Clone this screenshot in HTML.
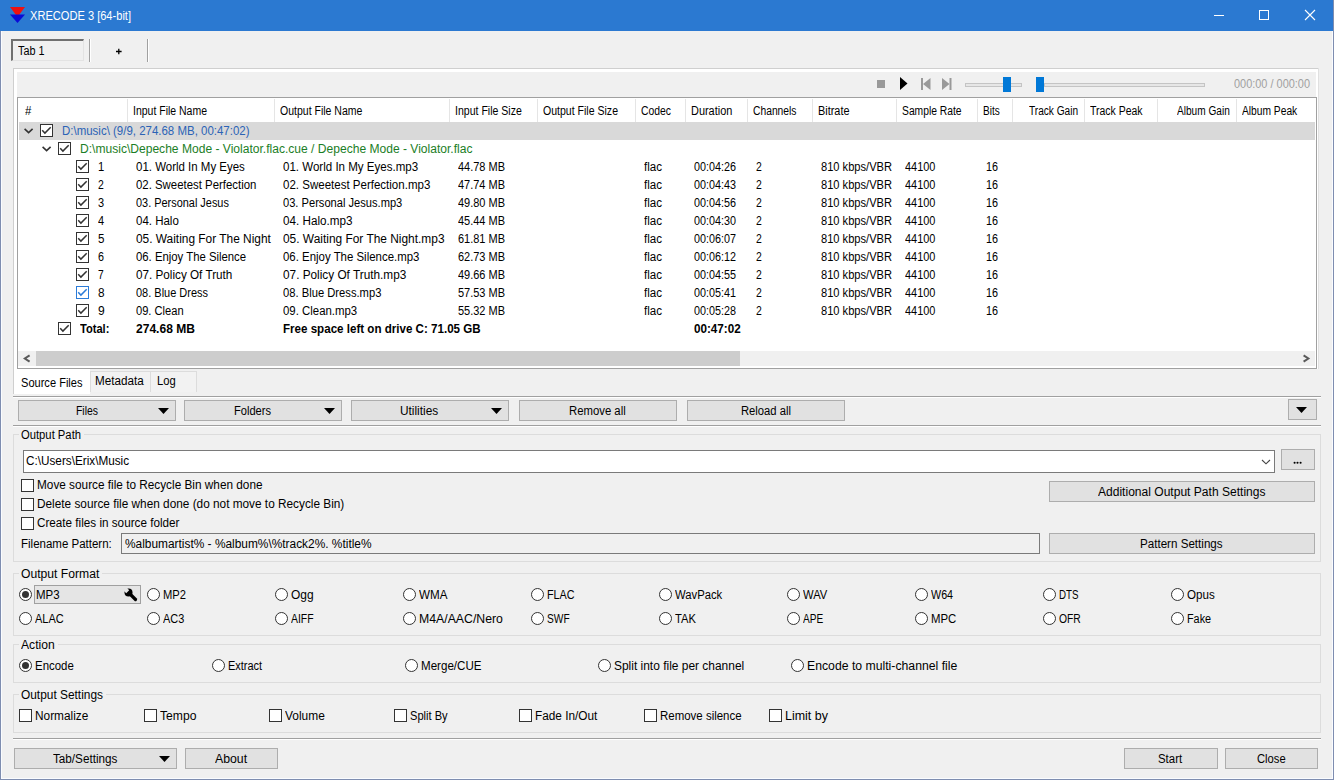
<!DOCTYPE html>
<html><head><meta charset="utf-8"><style>
html,body{margin:0;padding:0;}
body{width:1334px;height:780px;overflow:hidden;position:relative;background:#f0f0f0;font-family:"Liberation Sans",sans-serif;font-size:12px;color:#000;}
.a{position:absolute;}
.t{position:absolute;white-space:nowrap;line-height:18px;height:18px;}
svg{display:block;}
</style></head><body>
<div class="a" style="left:0px;top:0px;width:1334px;height:31px;background:#2b79d1;"></div>
<svg class="a" style="left:0;top:0" width="40" height="31"><path d="M10 7 H25 L17.5 17 Z" fill="#ee1111"/><path d="M10 14.5 H25 L17.5 23 Z" fill="#0a0ad8"/></svg>
<div class="t" style="left:29.50px;top:7px;color:#fff;transform:scaleX(0.9235);transform-origin:left center;">XRECODE 3 [64-bit]</div>
<div class="a" style="left:1214px;top:15px;width:10px;height:1px;background:#fff;"></div>
<div class="a" style="left:1259px;top:10px;width:10px;height:10px;border:1px solid #fff;box-sizing:border-box;"></div>
<svg class="a" style="left:1304px;top:9px" width="12" height="12"><path d="M1 1 L11 11 M11 1 L1 11" stroke="#fff" stroke-width="1.1"/></svg>
<div class="a" style="left:0px;top:31px;width:1px;height:749px;background:#7e8db0;"></div>
<div class="a" style="left:1333px;top:0px;width:1px;height:780px;background:#7e8db0;"></div>
<div class="a" style="left:0px;top:779px;width:1334px;height:1px;background:#7e8db0;"></div>
<div class="a" style="left:1px;top:31px;width:1px;height:748px;background:#fafcff;"></div>
<div class="a" style="left:1332px;top:31px;width:1px;height:748px;background:#fafcff;"></div>
<div class="a" style="left:1px;top:778px;width:1332px;height:1px;background:#fafcff;"></div>
<div class="a" style="left:11px;top:39px;width:73px;height:22px;box-sizing:border-box;border-top:2px solid #707070;border-left:2px solid #707070;border-right:1px solid #e3e3e3;border-bottom:1px solid #e3e3e3;"></div>
<div class="t" style="left:17.50px;top:42px;color:#000;transform:scaleX(0.9027);transform-origin:left center;">Tab 1</div>
<div class="a" style="left:89px;top:39px;width:1px;height:23px;background:#a0a0a0;"></div>
<div class="a" style="left:90px;top:39px;width:1px;height:23px;background:#fff;"></div>
<svg class="a" style="left:114px;top:46px" width="10" height="10"><path d="M2 5.5 H7.6 M4.8 2.8 V8.2" stroke="#000" stroke-width="1.3"/></svg>
<div class="a" style="left:147px;top:39px;width:1px;height:23px;background:#a0a0a0;"></div>
<div class="a" style="left:148px;top:39px;width:1px;height:23px;background:#fff;"></div>
<div class="a" style="left:13px;top:68px;width:1306px;height:1px;background:#cfcfcf;"></div>
<div class="a" style="left:13px;top:68px;width:1px;height:326px;background:#cfcfcf;"></div>
<div class="a" style="left:1318px;top:68px;width:1px;height:301px;background:#e0e0e0;"></div>
<div class="a" style="left:14px;top:69px;width:1304px;height:300px;background:#fff;"></div>
<div class="a" style="left:17px;top:72px;width:1299px;height:25px;background:#f0f0f0;"></div>
<div class="a" style="left:877px;top:80px;width:8px;height:8px;background:#999;"></div>
<svg class="a" style="left:900px;top:77px" width="8" height="13"><path d="M0 0 L7.5 6.5 L0 13 Z" fill="#000"/></svg>
<svg class="a" style="left:921px;top:78px" width="10" height="12"><rect x="0" y="0" width="2" height="12" fill="#999"/><path d="M9.5 0 V12 L2 6 Z" fill="#999"/></svg>
<svg class="a" style="left:942px;top:78px" width="10" height="12"><rect x="7.5" y="0" width="2" height="12" fill="#999"/><path d="M0 0 V12 L7.5 6 Z" fill="#999"/></svg>
<div class="a" style="left:965px;top:83px;width:57px;height:4px;background:#e6e6e6;border:1px solid #c4c4c4;box-sizing:border-box;"></div>
<div class="a" style="left:1003px;top:77px;width:8px;height:15px;background:#0078d7;"></div>
<div class="a" style="left:1044px;top:83px;width:161px;height:4px;background:#e6e6e6;border:1px solid #c4c4c4;box-sizing:border-box;"></div>
<div class="a" style="left:1036px;top:77px;width:8px;height:15px;background:#0078d7;"></div>
<div class="t" style="left:1233.50px;top:75px;color:#a0a0a0;transform:scaleX(0.9112);transform-origin:left center;">000:00 / 000:00</div>
<div class="a" style="left:17px;top:97px;width:1300px;height:272px;background:#fff;border:1px solid #a0a0a0;box-sizing:border-box;"></div>
<div class="t" style="left:25.00px;top:102px;color:#000;transform:scaleX(0.9500);transform-origin:left center;">#</div>
<div class="t" style="left:133.00px;top:102px;color:#000;transform:scaleX(0.8736);transform-origin:left center;">Input File Name</div>
<div class="t" style="left:280.00px;top:102px;color:#000;transform:scaleX(0.8762);transform-origin:left center;">Output File Name</div>
<div class="t" style="left:455.00px;top:102px;color:#000;transform:scaleX(0.8785);transform-origin:left center;">Input File Size</div>
<div class="t" style="left:542.80px;top:102px;color:#000;transform:scaleX(0.8785);transform-origin:left center;">Output File Size</div>
<div class="t" style="left:640.90px;top:102px;color:#000;transform:scaleX(0.8649);transform-origin:left center;">Codec</div>
<div class="t" style="left:690.50px;top:102px;color:#000;transform:scaleX(0.9105);transform-origin:left center;">Duration</div>
<div class="t" style="left:753.30px;top:102px;color:#000;transform:scaleX(0.8580);transform-origin:left center;">Channels</div>
<div class="t" style="left:818.00px;top:102px;color:#000;transform:scaleX(0.9083);transform-origin:left center;">Bitrate</div>
<div class="t" style="left:901.50px;top:102px;color:#000;transform:scaleX(0.8592);transform-origin:left center;">Sample Rate</div>
<div class="t" style="left:982.80px;top:102px;color:#000;transform:scaleX(0.8348);transform-origin:left center;">Bits</div>
<div class="t" style="left:1028.60px;top:102px;color:#000;transform:scaleX(0.8431);transform-origin:left center;">Track Gain</div>
<div class="t" style="left:1090.10px;top:102px;color:#000;transform:scaleX(0.8715);transform-origin:left center;">Track Peak</div>
<div class="t" style="left:1176.70px;top:102px;color:#000;transform:scaleX(0.8422);transform-origin:left center;">Album Gain</div>
<div class="t" style="left:1241.90px;top:102px;color:#000;transform:scaleX(0.8532);transform-origin:left center;">Album Peak</div>
<div class="a" style="left:127px;top:99px;width:1px;height:23px;background:#e5e5e5;"></div>
<div class="a" style="left:274px;top:99px;width:1px;height:23px;background:#e5e5e5;"></div>
<div class="a" style="left:449px;top:99px;width:1px;height:23px;background:#e5e5e5;"></div>
<div class="a" style="left:537px;top:99px;width:1px;height:23px;background:#e5e5e5;"></div>
<div class="a" style="left:635px;top:99px;width:1px;height:23px;background:#e5e5e5;"></div>
<div class="a" style="left:685px;top:99px;width:1px;height:23px;background:#e5e5e5;"></div>
<div class="a" style="left:747px;top:99px;width:1px;height:23px;background:#e5e5e5;"></div>
<div class="a" style="left:812px;top:99px;width:1px;height:23px;background:#e5e5e5;"></div>
<div class="a" style="left:896px;top:99px;width:1px;height:23px;background:#e5e5e5;"></div>
<div class="a" style="left:977px;top:99px;width:1px;height:23px;background:#e5e5e5;"></div>
<div class="a" style="left:1012px;top:99px;width:1px;height:23px;background:#e5e5e5;"></div>
<div class="a" style="left:1084px;top:99px;width:1px;height:23px;background:#e5e5e5;"></div>
<div class="a" style="left:1157px;top:99px;width:1px;height:23px;background:#e5e5e5;"></div>
<div class="a" style="left:1236px;top:99px;width:1px;height:23px;background:#e5e5e5;"></div>
<div class="a" style="left:19px;top:122px;width:1296px;height:18px;background:#d9d9d9;"></div>
<svg class="a" style="left:24px;top:127px" width="10" height="7"><path d="M0.6 1.9 L4.6 5.6 L8.6 1.9" fill="none" stroke="#333" stroke-width="1.6"/></svg>
<svg class="a" style="left:40px;top:124px" width="13" height="13" viewBox="0 0 13 13"><rect x="0.5" y="0.5" width="12" height="12" fill="#fff" stroke="#333" stroke-width="1"/><path d="M2.2 6.3 L4.9 9.1 L10.7 3.3" fill="none" stroke="#333" stroke-width="1.5"/></svg>
<div class="t" style="left:62.30px;top:122px;color:#2b63b6;transform:scaleX(0.9562);transform-origin:left center;">D:\music\ (9/9, 274.68 MB, 00:47:02)</div>
<svg class="a" style="left:42px;top:145px" width="10" height="7"><path d="M0.6 1.9 L4.6 5.6 L8.6 1.9" fill="none" stroke="#333" stroke-width="1.6"/></svg>
<svg class="a" style="left:58px;top:142px" width="13" height="13" viewBox="0 0 13 13"><rect x="0.5" y="0.5" width="12" height="12" fill="#fff" stroke="#333" stroke-width="1"/><path d="M2.2 6.3 L4.9 9.1 L10.7 3.3" fill="none" stroke="#333" stroke-width="1.5"/></svg>
<div class="t" style="left:80.30px;top:140px;color:#1b7e26;transform:scaleX(1.0053);transform-origin:left center;">D:\music\Depeche Mode - Violator.flac.cue / Depeche Mode - Violator.flac</div>
<svg class="a" style="left:76px;top:160px" width="13" height="13" viewBox="0 0 13 13"><rect x="0.5" y="0.5" width="12" height="12" fill="#fff" stroke="#333" stroke-width="1"/><path d="M2.2 6.3 L4.9 9.1 L10.7 3.3" fill="none" stroke="#333" stroke-width="1.5"/></svg>
<div class="t" style="left:97.50px;top:158px;color:#000;transform:scaleX(0.9362);transform-origin:left center;">1</div>
<div class="t" style="left:135.50px;top:158px;color:#000;transform:scaleX(0.9559);transform-origin:left center;">01. World In My Eyes</div>
<div class="t" style="left:282.50px;top:158px;color:#000;transform:scaleX(0.9623);transform-origin:left center;">01. World In My Eyes.mp3</div>
<div class="t" style="left:457.50px;top:158px;color:#000;transform:scaleX(0.9150);transform-origin:left center;">44.78 MB</div>
<div class="t" style="left:643.90px;top:158px;color:#000;transform:scaleX(0.9639);transform-origin:left center;">flac</div>
<div class="t" style="left:693.50px;top:158px;color:#000;transform:scaleX(0.8991);transform-origin:left center;">00:04:26</div>
<div class="t" style="left:755.70px;top:158px;color:#000;transform:scaleX(0.8690);transform-origin:left center;">2</div>
<div class="t" style="left:821.00px;top:158px;color:#000;transform:scaleX(0.9255);transform-origin:left center;">810 kbps/VBR</div>
<div class="t" style="left:904.50px;top:158px;color:#000;transform:scaleX(0.9110);transform-origin:left center;">44100</div>
<div class="t" style="left:985.50px;top:158px;color:#000;transform:scaleX(0.8990);transform-origin:left center;">16</div>
<svg class="a" style="left:76px;top:178px" width="13" height="13" viewBox="0 0 13 13"><rect x="0.5" y="0.5" width="12" height="12" fill="#fff" stroke="#333" stroke-width="1"/><path d="M2.2 6.3 L4.9 9.1 L10.7 3.3" fill="none" stroke="#333" stroke-width="1.5"/></svg>
<div class="t" style="left:97.50px;top:176px;color:#000;transform:scaleX(0.8690);transform-origin:left center;">2</div>
<div class="t" style="left:135.50px;top:176px;color:#000;transform:scaleX(0.9500);transform-origin:left center;">02. Sweetest Perfection</div>
<div class="t" style="left:282.50px;top:176px;color:#000;transform:scaleX(0.9601);transform-origin:left center;">02. Sweetest Perfection.mp3</div>
<div class="t" style="left:457.50px;top:176px;color:#000;transform:scaleX(0.9150);transform-origin:left center;">47.74 MB</div>
<div class="t" style="left:643.90px;top:176px;color:#000;transform:scaleX(0.9639);transform-origin:left center;">flac</div>
<div class="t" style="left:693.50px;top:176px;color:#000;transform:scaleX(0.8991);transform-origin:left center;">00:04:43</div>
<div class="t" style="left:755.70px;top:176px;color:#000;transform:scaleX(0.8690);transform-origin:left center;">2</div>
<div class="t" style="left:821.00px;top:176px;color:#000;transform:scaleX(0.9255);transform-origin:left center;">810 kbps/VBR</div>
<div class="t" style="left:904.50px;top:176px;color:#000;transform:scaleX(0.9110);transform-origin:left center;">44100</div>
<div class="t" style="left:985.50px;top:176px;color:#000;transform:scaleX(0.8990);transform-origin:left center;">16</div>
<svg class="a" style="left:76px;top:196px" width="13" height="13" viewBox="0 0 13 13"><rect x="0.5" y="0.5" width="12" height="12" fill="#fff" stroke="#333" stroke-width="1"/><path d="M2.2 6.3 L4.9 9.1 L10.7 3.3" fill="none" stroke="#333" stroke-width="1.5"/></svg>
<div class="t" style="left:97.50px;top:194px;color:#000;transform:scaleX(0.9160);transform-origin:left center;">3</div>
<div class="t" style="left:135.50px;top:194px;color:#000;transform:scaleX(0.9103);transform-origin:left center;">03. Personal Jesus</div>
<div class="t" style="left:282.50px;top:194px;color:#000;transform:scaleX(0.9267);transform-origin:left center;">03. Personal Jesus.mp3</div>
<div class="t" style="left:457.50px;top:194px;color:#000;transform:scaleX(0.9150);transform-origin:left center;">49.80 MB</div>
<div class="t" style="left:643.90px;top:194px;color:#000;transform:scaleX(0.9639);transform-origin:left center;">flac</div>
<div class="t" style="left:693.50px;top:194px;color:#000;transform:scaleX(0.8991);transform-origin:left center;">00:04:56</div>
<div class="t" style="left:755.70px;top:194px;color:#000;transform:scaleX(0.8690);transform-origin:left center;">2</div>
<div class="t" style="left:821.00px;top:194px;color:#000;transform:scaleX(0.9255);transform-origin:left center;">810 kbps/VBR</div>
<div class="t" style="left:904.50px;top:194px;color:#000;transform:scaleX(0.9110);transform-origin:left center;">44100</div>
<div class="t" style="left:985.50px;top:194px;color:#000;transform:scaleX(0.8990);transform-origin:left center;">16</div>
<svg class="a" style="left:76px;top:214px" width="13" height="13" viewBox="0 0 13 13"><rect x="0.5" y="0.5" width="12" height="12" fill="#fff" stroke="#333" stroke-width="1"/><path d="M2.2 6.3 L4.9 9.1 L10.7 3.3" fill="none" stroke="#333" stroke-width="1.5"/></svg>
<div class="t" style="left:97.50px;top:212px;color:#000;transform:scaleX(0.9167);transform-origin:left center;">4</div>
<div class="t" style="left:135.50px;top:212px;color:#000;transform:scaleX(0.9576);transform-origin:left center;">04. Halo</div>
<div class="t" style="left:282.50px;top:212px;color:#000;transform:scaleX(0.9737);transform-origin:left center;">04. Halo.mp3</div>
<div class="t" style="left:457.50px;top:212px;color:#000;transform:scaleX(0.9150);transform-origin:left center;">45.44 MB</div>
<div class="t" style="left:643.90px;top:212px;color:#000;transform:scaleX(0.9639);transform-origin:left center;">flac</div>
<div class="t" style="left:693.50px;top:212px;color:#000;transform:scaleX(0.8991);transform-origin:left center;">00:04:30</div>
<div class="t" style="left:755.70px;top:212px;color:#000;transform:scaleX(0.8690);transform-origin:left center;">2</div>
<div class="t" style="left:821.00px;top:212px;color:#000;transform:scaleX(0.9255);transform-origin:left center;">810 kbps/VBR</div>
<div class="t" style="left:904.50px;top:212px;color:#000;transform:scaleX(0.9110);transform-origin:left center;">44100</div>
<div class="t" style="left:985.50px;top:212px;color:#000;transform:scaleX(0.8990);transform-origin:left center;">16</div>
<svg class="a" style="left:76px;top:232px" width="13" height="13" viewBox="0 0 13 13"><rect x="0.5" y="0.5" width="12" height="12" fill="#fff" stroke="#333" stroke-width="1"/><path d="M2.2 6.3 L4.9 9.1 L10.7 3.3" fill="none" stroke="#333" stroke-width="1.5"/></svg>
<div class="t" style="left:97.50px;top:230px;color:#000;transform:scaleX(0.9676);transform-origin:left center;">5</div>
<div class="t" style="left:135.50px;top:230px;color:#000;transform:scaleX(0.9907);transform-origin:left center;">05. Waiting For The Night</div>
<div class="t" style="left:282.50px;top:230px;color:#000;transform:scaleX(0.9924);transform-origin:left center;">05. Waiting For The Night.mp3</div>
<div class="t" style="left:457.50px;top:230px;color:#000;transform:scaleX(0.9150);transform-origin:left center;">61.81 MB</div>
<div class="t" style="left:643.90px;top:230px;color:#000;transform:scaleX(0.9639);transform-origin:left center;">flac</div>
<div class="t" style="left:693.50px;top:230px;color:#000;transform:scaleX(0.8991);transform-origin:left center;">00:06:07</div>
<div class="t" style="left:755.70px;top:230px;color:#000;transform:scaleX(0.8690);transform-origin:left center;">2</div>
<div class="t" style="left:821.00px;top:230px;color:#000;transform:scaleX(0.9255);transform-origin:left center;">810 kbps/VBR</div>
<div class="t" style="left:904.50px;top:230px;color:#000;transform:scaleX(0.9110);transform-origin:left center;">44100</div>
<div class="t" style="left:985.50px;top:230px;color:#000;transform:scaleX(0.8990);transform-origin:left center;">16</div>
<svg class="a" style="left:76px;top:250px" width="13" height="13" viewBox="0 0 13 13"><rect x="0.5" y="0.5" width="12" height="12" fill="#fff" stroke="#333" stroke-width="1"/><path d="M2.2 6.3 L4.9 9.1 L10.7 3.3" fill="none" stroke="#333" stroke-width="1.5"/></svg>
<div class="t" style="left:97.50px;top:248px;color:#000;transform:scaleX(0.8976);transform-origin:left center;">6</div>
<div class="t" style="left:135.50px;top:248px;color:#000;transform:scaleX(0.9449);transform-origin:left center;">06. Enjoy The Silence</div>
<div class="t" style="left:282.50px;top:248px;color:#000;transform:scaleX(0.9525);transform-origin:left center;">06. Enjoy The Silence.mp3</div>
<div class="t" style="left:457.50px;top:248px;color:#000;transform:scaleX(0.9150);transform-origin:left center;">62.73 MB</div>
<div class="t" style="left:643.90px;top:248px;color:#000;transform:scaleX(0.9639);transform-origin:left center;">flac</div>
<div class="t" style="left:693.50px;top:248px;color:#000;transform:scaleX(0.8991);transform-origin:left center;">00:06:12</div>
<div class="t" style="left:755.70px;top:248px;color:#000;transform:scaleX(0.8690);transform-origin:left center;">2</div>
<div class="t" style="left:821.00px;top:248px;color:#000;transform:scaleX(0.9255);transform-origin:left center;">810 kbps/VBR</div>
<div class="t" style="left:904.50px;top:248px;color:#000;transform:scaleX(0.9110);transform-origin:left center;">44100</div>
<div class="t" style="left:985.50px;top:248px;color:#000;transform:scaleX(0.8990);transform-origin:left center;">16</div>
<svg class="a" style="left:76px;top:268px" width="13" height="13" viewBox="0 0 13 13"><rect x="0.5" y="0.5" width="12" height="12" fill="#fff" stroke="#333" stroke-width="1"/><path d="M2.2 6.3 L4.9 9.1 L10.7 3.3" fill="none" stroke="#333" stroke-width="1.5"/></svg>
<div class="t" style="left:97.50px;top:266px;color:#000;transform:scaleX(0.8490);transform-origin:left center;">7</div>
<div class="t" style="left:135.50px;top:266px;color:#000;transform:scaleX(0.9756);transform-origin:left center;">07. Policy Of Truth</div>
<div class="t" style="left:282.50px;top:266px;color:#000;transform:scaleX(0.9834);transform-origin:left center;">07. Policy Of Truth.mp3</div>
<div class="t" style="left:457.50px;top:266px;color:#000;transform:scaleX(0.9150);transform-origin:left center;">49.66 MB</div>
<div class="t" style="left:643.90px;top:266px;color:#000;transform:scaleX(0.9639);transform-origin:left center;">flac</div>
<div class="t" style="left:693.50px;top:266px;color:#000;transform:scaleX(0.8991);transform-origin:left center;">00:04:55</div>
<div class="t" style="left:755.70px;top:266px;color:#000;transform:scaleX(0.8690);transform-origin:left center;">2</div>
<div class="t" style="left:821.00px;top:266px;color:#000;transform:scaleX(0.9255);transform-origin:left center;">810 kbps/VBR</div>
<div class="t" style="left:904.50px;top:266px;color:#000;transform:scaleX(0.9110);transform-origin:left center;">44100</div>
<div class="t" style="left:985.50px;top:266px;color:#000;transform:scaleX(0.8990);transform-origin:left center;">16</div>
<svg class="a" style="left:76px;top:286px" width="13" height="13" viewBox="0 0 13 13"><rect x="0.5" y="0.5" width="12" height="12" fill="#fff" stroke="#2b7bd8" stroke-width="1"/><path d="M2.2 6.3 L4.9 9.1 L10.7 3.3" fill="none" stroke="#2b7bd8" stroke-width="1.5"/></svg>
<div class="t" style="left:97.50px;top:284px;color:#000;transform:scaleX(0.9838);transform-origin:left center;">8</div>
<div class="t" style="left:135.50px;top:284px;color:#000;transform:scaleX(0.9148);transform-origin:left center;">08. Blue Dress</div>
<div class="t" style="left:282.50px;top:284px;color:#000;transform:scaleX(0.9337);transform-origin:left center;">08. Blue Dress.mp3</div>
<div class="t" style="left:457.50px;top:284px;color:#000;transform:scaleX(0.9150);transform-origin:left center;">57.53 MB</div>
<div class="t" style="left:643.90px;top:284px;color:#000;transform:scaleX(0.9639);transform-origin:left center;">flac</div>
<div class="t" style="left:693.50px;top:284px;color:#000;transform:scaleX(0.8991);transform-origin:left center;">00:05:41</div>
<div class="t" style="left:755.70px;top:284px;color:#000;transform:scaleX(0.8690);transform-origin:left center;">2</div>
<div class="t" style="left:821.00px;top:284px;color:#000;transform:scaleX(0.9255);transform-origin:left center;">810 kbps/VBR</div>
<div class="t" style="left:904.50px;top:284px;color:#000;transform:scaleX(0.9110);transform-origin:left center;">44100</div>
<div class="t" style="left:985.50px;top:284px;color:#000;transform:scaleX(0.8990);transform-origin:left center;">16</div>
<svg class="a" style="left:76px;top:304px" width="13" height="13" viewBox="0 0 13 13"><rect x="0.5" y="0.5" width="12" height="12" fill="#fff" stroke="#333" stroke-width="1"/><path d="M2.2 6.3 L4.9 9.1 L10.7 3.3" fill="none" stroke="#333" stroke-width="1.5"/></svg>
<div class="t" style="left:97.50px;top:302px;color:#000;transform:scaleX(1.0051);transform-origin:left center;">9</div>
<div class="t" style="left:135.50px;top:302px;color:#000;transform:scaleX(0.9266);transform-origin:left center;">09. Clean</div>
<div class="t" style="left:282.50px;top:302px;color:#000;transform:scaleX(0.9507);transform-origin:left center;">09. Clean.mp3</div>
<div class="t" style="left:457.50px;top:302px;color:#000;transform:scaleX(0.9150);transform-origin:left center;">55.32 MB</div>
<div class="t" style="left:643.90px;top:302px;color:#000;transform:scaleX(0.9639);transform-origin:left center;">flac</div>
<div class="t" style="left:693.50px;top:302px;color:#000;transform:scaleX(0.8991);transform-origin:left center;">00:05:28</div>
<div class="t" style="left:755.70px;top:302px;color:#000;transform:scaleX(0.8690);transform-origin:left center;">2</div>
<div class="t" style="left:821.00px;top:302px;color:#000;transform:scaleX(0.9255);transform-origin:left center;">810 kbps/VBR</div>
<div class="t" style="left:904.50px;top:302px;color:#000;transform:scaleX(0.9110);transform-origin:left center;">44100</div>
<div class="t" style="left:985.50px;top:302px;color:#000;transform:scaleX(0.8990);transform-origin:left center;">16</div>
<svg class="a" style="left:58px;top:322px" width="13" height="13" viewBox="0 0 13 13"><rect x="0.5" y="0.5" width="12" height="12" fill="#fff" stroke="#333" stroke-width="1"/><path d="M2.2 6.3 L4.9 9.1 L10.7 3.3" fill="none" stroke="#333" stroke-width="1.5"/></svg>
<div class="t" style="left:80.40px;top:320px;color:#000;font-weight:bold;transform:scaleX(0.9254);transform-origin:left center;">Total:</div>
<div class="t" style="left:135.70px;top:320px;color:#000;font-weight:bold;transform:scaleX(1.0051);transform-origin:left center;">274.68 MB</div>
<div class="t" style="left:282.50px;top:320px;color:#000;font-weight:bold;transform:scaleX(0.9651);transform-origin:left center;">Free space left on drive C: 71.05 GB</div>
<div class="t" style="left:693.50px;top:320px;color:#000;font-weight:bold;transform:scaleX(0.9722);transform-origin:left center;">00:47:02</div>
<div class="a" style="left:18px;top:351px;width:1297px;height:15px;background:#f0f0f0;"></div>
<div class="a" style="left:36px;top:351px;width:704px;height:15px;background:#cdcdcd;"></div>
<svg class="a" style="left:23px;top:354px" width="9" height="10"><path d="M6.6 1.3 L1.8 4.5 L6.6 7.7" fill="none" stroke="#5a5a5a" stroke-width="2"/></svg>
<svg class="a" style="left:1302px;top:354px" width="9" height="10"><path d="M1.6 1.3 L6.4 4.5 L1.6 7.7" fill="none" stroke="#5a5a5a" stroke-width="2"/></svg>
<div class="a" style="left:14px;top:369px;width:76px;height:25px;background:#fff;"></div>
<div class="a" style="left:90px;top:371px;width:61px;height:21px;box-sizing:border-box;border:1px solid #dcdcdc;border-bottom:none;background:#f2f2f2"></div>
<div class="a" style="left:150px;top:371px;width:47px;height:21px;box-sizing:border-box;border:1px solid #dcdcdc;border-bottom:none;background:#f2f2f2"></div>
<div class="t" style="left:20.90px;top:374px;color:#000;transform:scaleX(0.9221);transform-origin:left center;">Source Files</div>
<div class="t" style="left:95.00px;top:372px;color:#000;transform:scaleX(0.9733);transform-origin:left center;">Metadata</div>
<div class="t" style="left:157.10px;top:372px;color:#000;transform:scaleX(0.9340);transform-origin:left center;">Log</div>
<div class="a" style="left:13px;top:396px;width:1308px;height:1px;background:#a0a0a0;"></div>
<div class="a" style="left:13px;top:397px;width:1308px;height:1px;background:#fff;"></div>
<div class="a" style="left:18px;top:400px;width:158px;height:21px;background:#e1e1e1;border:1px solid #adadad;box-sizing:border-box;"></div>
<div class="t" style="left:75.50px;top:402px;color:#000;transform:scaleX(0.8683);transform-origin:left center;">Files</div>
<svg class="a" style="left:158px;top:408px" width="11" height="6" viewBox="0 0 11 6"><path d="M0 0 H11 L5.5 6 Z" fill="#000"/></svg>
<div class="a" style="left:184px;top:400px;width:158px;height:21px;background:#e1e1e1;border:1px solid #adadad;box-sizing:border-box;"></div>
<div class="t" style="left:234.00px;top:402px;color:#000;transform:scaleX(0.9247);transform-origin:left center;">Folders</div>
<svg class="a" style="left:324px;top:408px" width="11" height="6" viewBox="0 0 11 6"><path d="M0 0 H11 L5.5 6 Z" fill="#000"/></svg>
<div class="a" style="left:351px;top:400px;width:158px;height:21px;background:#e1e1e1;border:1px solid #adadad;box-sizing:border-box;"></div>
<div class="t" style="left:400.40px;top:402px;color:#000;transform:scaleX(0.9878);transform-origin:left center;">Utilities</div>
<svg class="a" style="left:491px;top:408px" width="11" height="6" viewBox="0 0 11 6"><path d="M0 0 H11 L5.5 6 Z" fill="#000"/></svg>
<div class="a" style="left:519px;top:400px;width:158px;height:21px;background:#e1e1e1;border:1px solid #adadad;box-sizing:border-box;"></div>
<div class="t" style="left:569.15px;top:402px;color:#000;transform:scaleX(0.9446);transform-origin:left center;">Remove all</div>
<div class="a" style="left:687px;top:400px;width:158px;height:21px;background:#e1e1e1;border:1px solid #adadad;box-sizing:border-box;"></div>
<div class="t" style="left:740.54px;top:402px;color:#000;transform:scaleX(0.9353);transform-origin:left center;">Reload all</div>
<div class="a" style="left:1288px;top:399px;width:29px;height:21px;background:#e1e1e1;border:1px solid #adadad;box-sizing:border-box;"></div>
<svg class="a" style="left:1296px;top:407px" width="11" height="6" viewBox="0 0 11 6"><path d="M0 0 H11 L5.5 6 Z" fill="#000"/></svg>
<div class="a" style="left:13px;top:425px;width:1308px;height:1px;background:#a0a0a0;"></div>
<div class="a" style="left:13px;top:426px;width:1308px;height:1px;background:#fff;"></div>
<div class="a" style="left:13px;top:434px;width:1308px;height:128px;border:1px solid #dcdcdc;box-sizing:border-box;"></div>
<div class="a" style="left:19px;top:432px;width:65px;height:5px;background:#f0f0f0;"></div>
<div class="t" style="left:21.10px;top:426px;color:#000;transform:scaleX(0.9369);transform-origin:left center;">Output Path</div>
<div class="a" style="left:23px;top:450px;width:1252px;height:23px;background:#fff;border:1px solid #7a7a7a;box-sizing:border-box;"></div>
<div class="t" style="left:25.90px;top:452px;color:#000;transform:scaleX(0.9787);transform-origin:left center;">C:\Users\Erix\Music</div>
<svg class="a" style="left:1261px;top:459px" width="11" height="7"><path d="M1 1 L5 4.8 L9 1" fill="none" stroke="#444" stroke-width="1.1"/></svg>
<div class="a" style="left:1281px;top:449px;width:34px;height:21px;background:#e1e1e1;border:1px solid #adadad;box-sizing:border-box;"></div>
<svg class="a" style="left:1290px;top:458px" width="14" height="8"><circle cx="4.6" cy="4.8" r="1.05" fill="#000"/><circle cx="7.5" cy="4.8" r="1.05" fill="#000"/><circle cx="10.6" cy="4.8" r="1.05" fill="#000"/></svg>
<svg class="a" style="left:21px;top:479px" width="13" height="13" viewBox="0 0 13 13"><rect x="0.5" y="0.5" width="12" height="12" fill="#fff" stroke="#333" stroke-width="1"/></svg>
<div class="t" style="left:37.00px;top:476px;color:#000;transform:scaleX(0.9828);transform-origin:left center;">Move source file to Recycle Bin when done</div>
<svg class="a" style="left:21px;top:498px" width="13" height="13" viewBox="0 0 13 13"><rect x="0.5" y="0.5" width="12" height="12" fill="#fff" stroke="#333" stroke-width="1"/></svg>
<div class="t" style="left:37.00px;top:495px;color:#000;transform:scaleX(0.9844);transform-origin:left center;">Delete source file when done (do not move to Recycle Bin)</div>
<svg class="a" style="left:21px;top:517px" width="13" height="13" viewBox="0 0 13 13"><rect x="0.5" y="0.5" width="12" height="12" fill="#fff" stroke="#333" stroke-width="1"/></svg>
<div class="t" style="left:37.00px;top:514px;color:#000;transform:scaleX(0.9749);transform-origin:left center;">Create files in source folder</div>
<div class="a" style="left:1049px;top:481px;width:266px;height:21px;background:#e1e1e1;border:1px solid #adadad;box-sizing:border-box;"></div>
<div class="t" style="left:1097.75px;top:483px;color:#000;transform:scaleX(1.0043);transform-origin:left center;">Additional Output Path Settings</div>
<div class="t" style="left:21.10px;top:535px;color:#000;transform:scaleX(0.9587);transform-origin:left center;">Filename Pattern:</div>
<div class="a" style="left:121px;top:533px;width:919px;height:21px;background:#f0f0f0;border:1px solid #7a7a7a;box-sizing:border-box;"></div>
<div class="t" style="left:124.80px;top:535px;color:#000;transform:scaleX(0.9910);transform-origin:left center;">%albumartist% - %album%\%track2%. %title%</div>
<div class="a" style="left:1049px;top:533px;width:266px;height:21px;background:#e1e1e1;border:1px solid #adadad;box-sizing:border-box;"></div>
<div class="t" style="left:1140.20px;top:535px;color:#000;transform:scaleX(0.9674);transform-origin:left center;">Pattern Settings</div>
<div class="a" style="left:13px;top:573px;width:1308px;height:63px;border:1px solid #dcdcdc;box-sizing:border-box;"></div>
<div class="a" style="left:19px;top:571px;width:83.3px;height:5px;background:#f0f0f0;"></div>
<div class="t" style="left:21.10px;top:565px;color:#000;transform:scaleX(1.0121);transform-origin:left center;">Output Format</div>
<svg class="a" style="left:19px;top:588px" width="13" height="13" viewBox="0 0 13 13"><circle cx="6.5" cy="6.5" r="6" fill="#fff" stroke="#333" stroke-width="1"/><circle cx="6.5" cy="6.5" r="3.5" fill="#333"/></svg>
<svg class="a" style="left:19px;top:612px" width="13" height="13" viewBox="0 0 13 13"><circle cx="6.5" cy="6.5" r="6" fill="#fff" stroke="#333" stroke-width="1"/></svg>
<div class="t" style="left:35.00px;top:610px;color:#000;transform:scaleX(0.9155);transform-origin:left center;">ALAC</div>
<svg class="a" style="left:147px;top:588px" width="13" height="13" viewBox="0 0 13 13"><circle cx="6.5" cy="6.5" r="6" fill="#fff" stroke="#333" stroke-width="1"/></svg>
<svg class="a" style="left:147px;top:612px" width="13" height="13" viewBox="0 0 13 13"><circle cx="6.5" cy="6.5" r="6" fill="#fff" stroke="#333" stroke-width="1"/></svg>
<div class="t" style="left:163.00px;top:586px;color:#000;transform:scaleX(0.9322);transform-origin:left center;">MP2</div>
<div class="t" style="left:163.00px;top:610px;color:#000;transform:scaleX(0.9124);transform-origin:left center;">AC3</div>
<svg class="a" style="left:275px;top:588px" width="13" height="13" viewBox="0 0 13 13"><circle cx="6.5" cy="6.5" r="6" fill="#fff" stroke="#333" stroke-width="1"/></svg>
<svg class="a" style="left:275px;top:612px" width="13" height="13" viewBox="0 0 13 13"><circle cx="6.5" cy="6.5" r="6" fill="#fff" stroke="#333" stroke-width="1"/></svg>
<div class="t" style="left:291.00px;top:586px;color:#000;transform:scaleX(0.9964);transform-origin:left center;">Ogg</div>
<div class="t" style="left:291.00px;top:610px;color:#000;transform:scaleX(0.8693);transform-origin:left center;">AIFF</div>
<svg class="a" style="left:403px;top:588px" width="13" height="13" viewBox="0 0 13 13"><circle cx="6.5" cy="6.5" r="6" fill="#fff" stroke="#333" stroke-width="1"/></svg>
<svg class="a" style="left:403px;top:612px" width="13" height="13" viewBox="0 0 13 13"><circle cx="6.5" cy="6.5" r="6" fill="#fff" stroke="#333" stroke-width="1"/></svg>
<div class="t" style="left:419.00px;top:586px;color:#000;transform:scaleX(0.9691);transform-origin:left center;">WMA</div>
<div class="t" style="left:419.00px;top:610px;color:#000;transform:scaleX(1.0228);transform-origin:left center;">M4A/AAC/Nero</div>
<svg class="a" style="left:531px;top:588px" width="13" height="13" viewBox="0 0 13 13"><circle cx="6.5" cy="6.5" r="6" fill="#fff" stroke="#333" stroke-width="1"/></svg>
<svg class="a" style="left:531px;top:612px" width="13" height="13" viewBox="0 0 13 13"><circle cx="6.5" cy="6.5" r="6" fill="#fff" stroke="#333" stroke-width="1"/></svg>
<div class="t" style="left:547.00px;top:586px;color:#000;transform:scaleX(0.8998);transform-origin:left center;">FLAC</div>
<div class="t" style="left:547.00px;top:610px;color:#000;transform:scaleX(0.8477);transform-origin:left center;">SWF</div>
<svg class="a" style="left:659px;top:588px" width="13" height="13" viewBox="0 0 13 13"><circle cx="6.5" cy="6.5" r="6" fill="#fff" stroke="#333" stroke-width="1"/></svg>
<svg class="a" style="left:659px;top:612px" width="13" height="13" viewBox="0 0 13 13"><circle cx="6.5" cy="6.5" r="6" fill="#fff" stroke="#333" stroke-width="1"/></svg>
<div class="t" style="left:675.00px;top:586px;color:#000;transform:scaleX(0.9396);transform-origin:left center;">WavPack</div>
<div class="t" style="left:675.00px;top:610px;color:#000;transform:scaleX(0.9311);transform-origin:left center;">TAK</div>
<svg class="a" style="left:787px;top:588px" width="13" height="13" viewBox="0 0 13 13"><circle cx="6.5" cy="6.5" r="6" fill="#fff" stroke="#333" stroke-width="1"/></svg>
<svg class="a" style="left:787px;top:612px" width="13" height="13" viewBox="0 0 13 13"><circle cx="6.5" cy="6.5" r="6" fill="#fff" stroke="#333" stroke-width="1"/></svg>
<div class="t" style="left:803.00px;top:586px;color:#000;transform:scaleX(0.9347);transform-origin:left center;">WAV</div>
<div class="t" style="left:803.00px;top:610px;color:#000;transform:scaleX(0.8413);transform-origin:left center;">APE</div>
<svg class="a" style="left:915px;top:588px" width="13" height="13" viewBox="0 0 13 13"><circle cx="6.5" cy="6.5" r="6" fill="#fff" stroke="#333" stroke-width="1"/></svg>
<svg class="a" style="left:915px;top:612px" width="13" height="13" viewBox="0 0 13 13"><circle cx="6.5" cy="6.5" r="6" fill="#fff" stroke="#333" stroke-width="1"/></svg>
<div class="t" style="left:931.00px;top:586px;color:#000;transform:scaleX(0.8957);transform-origin:left center;">W64</div>
<div class="t" style="left:931.00px;top:610px;color:#000;transform:scaleX(0.9488);transform-origin:left center;">MPC</div>
<svg class="a" style="left:1043px;top:588px" width="13" height="13" viewBox="0 0 13 13"><circle cx="6.5" cy="6.5" r="6" fill="#fff" stroke="#333" stroke-width="1"/></svg>
<svg class="a" style="left:1043px;top:612px" width="13" height="13" viewBox="0 0 13 13"><circle cx="6.5" cy="6.5" r="6" fill="#fff" stroke="#333" stroke-width="1"/></svg>
<div class="t" style="left:1059.00px;top:586px;color:#000;transform:scaleX(0.8125);transform-origin:left center;">DTS</div>
<div class="t" style="left:1059.00px;top:610px;color:#000;transform:scaleX(0.8606);transform-origin:left center;">OFR</div>
<svg class="a" style="left:1171px;top:588px" width="13" height="13" viewBox="0 0 13 13"><circle cx="6.5" cy="6.5" r="6" fill="#fff" stroke="#333" stroke-width="1"/></svg>
<svg class="a" style="left:1171px;top:612px" width="13" height="13" viewBox="0 0 13 13"><circle cx="6.5" cy="6.5" r="6" fill="#fff" stroke="#333" stroke-width="1"/></svg>
<div class="t" style="left:1187.00px;top:586px;color:#000;transform:scaleX(0.9658);transform-origin:left center;">Opus</div>
<div class="t" style="left:1187.00px;top:610px;color:#000;transform:scaleX(0.9034);transform-origin:left center;">Fake</div>
<div class="a" style="left:34px;top:585px;width:107px;height:19px;background:#e5e5e5;border:1px solid #a0a0a0;box-sizing:border-box;"></div>
<div class="t" style="left:36.00px;top:586px;color:#000;transform:scaleX(0.9565);transform-origin:left center;">MP3</div>
<svg class="a" style="left:124px;top:588px" width="14" height="14" viewBox="0 0 14 14"><path d="M5.5 5.5 L11.5 11.5" stroke="#000" stroke-width="3.2" stroke-linecap="round"/><circle cx="4.5" cy="4.5" r="4" fill="#000"/><path d="M-1 2 L2 -1 L5.2 2.2 L2.2 5.2 Z" fill="#e5e5e5"/></svg>
<div class="a" style="left:13px;top:644px;width:1308px;height:39px;border:1px solid #dcdcdc;box-sizing:border-box;"></div>
<div class="a" style="left:19px;top:642px;width:38.7px;height:5px;background:#f0f0f0;"></div>
<div class="t" style="left:21.10px;top:636px;color:#000;transform:scaleX(1.0104);transform-origin:left center;">Action</div>
<svg class="a" style="left:19px;top:659px" width="13" height="13" viewBox="0 0 13 13"><circle cx="6.5" cy="6.5" r="6" fill="#fff" stroke="#333" stroke-width="1"/><circle cx="6.5" cy="6.5" r="3.5" fill="#333"/></svg>
<div class="t" style="left:35.00px;top:657px;color:#000;transform:scaleX(0.9533);transform-origin:left center;">Encode</div>
<svg class="a" style="left:212px;top:659px" width="13" height="13" viewBox="0 0 13 13"><circle cx="6.5" cy="6.5" r="6" fill="#fff" stroke="#333" stroke-width="1"/></svg>
<div class="t" style="left:228.00px;top:657px;color:#000;transform:scaleX(0.9132);transform-origin:left center;">Extract</div>
<svg class="a" style="left:405px;top:659px" width="13" height="13" viewBox="0 0 13 13"><circle cx="6.5" cy="6.5" r="6" fill="#fff" stroke="#333" stroke-width="1"/></svg>
<div class="t" style="left:421.00px;top:657px;color:#000;transform:scaleX(0.9655);transform-origin:left center;">Merge/CUE</div>
<svg class="a" style="left:598px;top:659px" width="13" height="13" viewBox="0 0 13 13"><circle cx="6.5" cy="6.5" r="6" fill="#fff" stroke="#333" stroke-width="1"/></svg>
<div class="t" style="left:614.00px;top:657px;color:#000;transform:scaleX(0.9958);transform-origin:left center;">Split into file per channel</div>
<svg class="a" style="left:791px;top:659px" width="13" height="13" viewBox="0 0 13 13"><circle cx="6.5" cy="6.5" r="6" fill="#fff" stroke="#333" stroke-width="1"/></svg>
<div class="t" style="left:807.00px;top:657px;color:#000;transform:scaleX(1.0196);transform-origin:left center;">Encode to multi-channel file</div>
<div class="a" style="left:13px;top:694px;width:1308px;height:39px;border:1px solid #dcdcdc;box-sizing:border-box;"></div>
<div class="a" style="left:19px;top:692px;width:87px;height:5px;background:#f0f0f0;"></div>
<div class="t" style="left:21.10px;top:686px;color:#000;transform:scaleX(0.9913);transform-origin:left center;">Output Settings</div>
<svg class="a" style="left:19px;top:709px" width="13" height="13" viewBox="0 0 13 13"><rect x="0.5" y="0.5" width="12" height="12" fill="#fff" stroke="#333" stroke-width="1"/></svg>
<div class="t" style="left:35.00px;top:707px;color:#000;transform:scaleX(0.9868);transform-origin:left center;">Normalize</div>
<svg class="a" style="left:144px;top:709px" width="13" height="13" viewBox="0 0 13 13"><rect x="0.5" y="0.5" width="12" height="12" fill="#fff" stroke="#333" stroke-width="1"/></svg>
<div class="t" style="left:160.00px;top:707px;color:#000;transform:scaleX(1.0106);transform-origin:left center;">Tempo</div>
<svg class="a" style="left:269px;top:709px" width="13" height="13" viewBox="0 0 13 13"><rect x="0.5" y="0.5" width="12" height="12" fill="#fff" stroke="#333" stroke-width="1"/></svg>
<div class="t" style="left:285.00px;top:707px;color:#000;transform:scaleX(0.9944);transform-origin:left center;">Volume</div>
<svg class="a" style="left:394px;top:709px" width="13" height="13" viewBox="0 0 13 13"><rect x="0.5" y="0.5" width="12" height="12" fill="#fff" stroke="#333" stroke-width="1"/></svg>
<div class="t" style="left:410.00px;top:707px;color:#000;transform:scaleX(0.9252);transform-origin:left center;">Split By</div>
<svg class="a" style="left:519px;top:709px" width="13" height="13" viewBox="0 0 13 13"><rect x="0.5" y="0.5" width="12" height="12" fill="#fff" stroke="#333" stroke-width="1"/></svg>
<div class="t" style="left:535.00px;top:707px;color:#000;transform:scaleX(0.9847);transform-origin:left center;">Fade In/Out</div>
<svg class="a" style="left:644px;top:709px" width="13" height="13" viewBox="0 0 13 13"><rect x="0.5" y="0.5" width="12" height="12" fill="#fff" stroke="#333" stroke-width="1"/></svg>
<div class="t" style="left:660.00px;top:707px;color:#000;transform:scaleX(0.9558);transform-origin:left center;">Remove silence</div>
<svg class="a" style="left:769px;top:709px" width="13" height="13" viewBox="0 0 13 13"><rect x="0.5" y="0.5" width="12" height="12" fill="#fff" stroke="#333" stroke-width="1"/></svg>
<div class="t" style="left:785.00px;top:707px;color:#000;transform:scaleX(1.0376);transform-origin:left center;">Limit by</div>
<div class="a" style="left:13px;top:738px;width:1308px;height:1px;background:#a0a0a0;"></div>
<div class="a" style="left:13px;top:739px;width:1308px;height:1px;background:#fff;"></div>
<div class="a" style="left:14px;top:748px;width:163px;height:21px;background:#e1e1e1;border:1px solid #adadad;box-sizing:border-box;"></div>
<div class="t" style="left:52.80px;top:750px;color:#000;transform:scaleX(0.9751);transform-origin:left center;">Tab/Settings</div>
<svg class="a" style="left:159px;top:756px" width="11" height="6" viewBox="0 0 11 6"><path d="M0 0 H11 L5.5 6 Z" fill="#000"/></svg>
<div class="a" style="left:185px;top:748px;width:93px;height:21px;background:#e1e1e1;border:1px solid #adadad;box-sizing:border-box;"></div>
<div class="t" style="left:214.95px;top:750px;color:#000;transform:scaleX(1.0236);transform-origin:left center;">About</div>
<div class="a" style="left:1124px;top:748px;width:94px;height:21px;background:#e1e1e1;border:1px solid #adadad;box-sizing:border-box;"></div>
<div class="t" style="left:1158.45px;top:750px;color:#000;transform:scaleX(0.9510);transform-origin:left center;">Start</div>
<div class="a" style="left:1225px;top:748px;width:93px;height:21px;background:#e1e1e1;border:1px solid #adadad;box-sizing:border-box;"></div>
<div class="t" style="left:1256.70px;top:750px;color:#000;transform:scaleX(0.9322);transform-origin:left center;">Close</div>
</body></html>
